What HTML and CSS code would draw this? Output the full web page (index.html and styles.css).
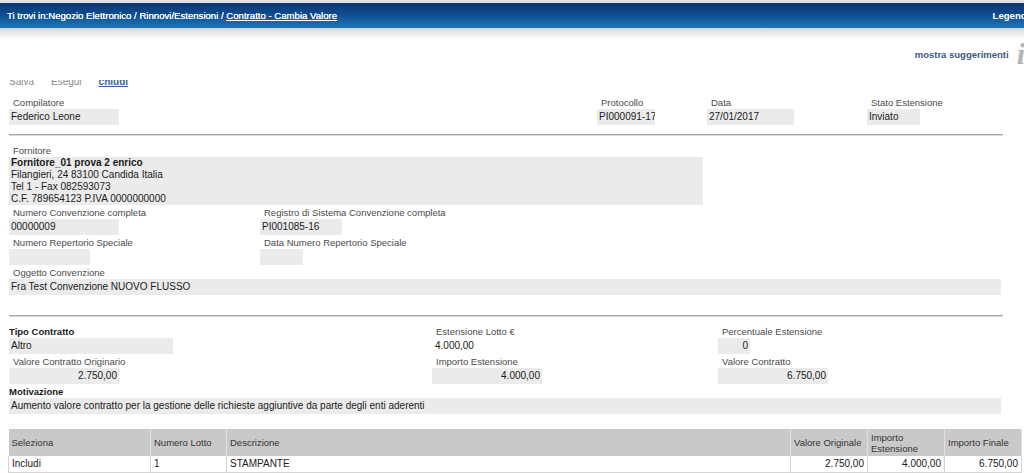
FILE: index.html
```html
<!DOCTYPE html>
<html lang="it">
<head>
    <meta charset="UTF-8">
    <title>Contratto - Cambia Valore</title>
    <link rel="stylesheet" href="styles.css">
</head>
<body>

    <!-- Breadcrumb bar -->
    <div class="topbar">
        <div class="crumbs">Ti trovi in:Negozio Elettronico / Rinnovi/Estensioni / <a href="#">Contratto - Cambia Valore</a></div>
        <div class="legend">Legenda</div>
    </div>
    <div class="topshade"></div>

    <div class="hints">
        <a href="#" class="hint-link">mostra suggerimenti</a>
        <span class="info-i">i</span>
    </div>

    <!-- Toolbar -->
    <div class="toolbar">
        <div class="toolbar-inner">
            <span class="tool">Salva</span>
            <span class="tool">Esegui</span>
            <a href="#" class="tool tool-link">chiudi</a>
        </div>
    </div>

    <div class="form">
        <div class="row row-head">
            <div class="field">
                <div class="label">Compilatore</div>
                <div class="box w110">Federico Leone</div>
            </div>
            <div class="field">
                <div class="label">Protocollo</div>
                <div class="box w58">PI000091-17</div>
            </div>
            <div class="field">
                <div class="label">Data</div>
                <div class="box w87">27/01/2017</div>
            </div>
            <div class="field">
                <div class="label">Stato Estensione</div>
                <div class="box w53">Inviato</div>
            </div>
        </div>

        <div class="sep"></div>

        <div class="field">
            <div class="label">Fornitore</div>
            <div class="box box-multi w694">
                <strong>Fornitore_01 prova 2 enrico</strong><br>
                Filangieri, 24 83100 Candida Italia<br>
                Tel 1 - Fax 082593073<br>
                C.F. 789654123 P.IVA 0000000000
            </div>
        </div>

        <div class="row row-conv">
            <div class="field">
                <div class="label">Numero Convenzione completa</div>
                <div class="box w110">00000009</div>
            </div>
            <div class="field">
                <div class="label">Registro di Sistema Convenzione completa</div>
                <div class="box w82">PI001085-16</div>
            </div>
        </div>

        <div class="row row-conv">
            <div class="field">
                <div class="label">Numero Repertorio Speciale</div>
                <div class="box w81"></div>
            </div>
            <div class="field">
                <div class="label">Data Numero Repertorio Speciale</div>
                <div class="box w43"></div>
            </div>
        </div>

        <div class="field">
            <div class="label">Oggetto Convenzione</div>
            <div class="box w992">Fra Test Convenzione NUOVO FLUSSO</div>
        </div>

        <div class="sep sep-low"></div>

        <div class="row row-value">
            <div class="field">
                <div class="label label-bold">Tipo Contratto</div>
                <div class="box w164">Altro</div>
            </div>
            <div class="field">
                <div class="label">Estensione Lotto &euro;</div>
                <div class="box box-plain w110">4.000,00</div>
            </div>
            <div class="field">
                <div class="label">Percentuale Estensione</div>
                <div class="box num w32">0</div>
            </div>
        </div>

        <div class="row row-value">
            <div class="field">
                <div class="label">Valore Contratto Originario</div>
                <div class="box num w110">2.750,00</div>
            </div>
            <div class="field">
                <div class="label">Importo Estensione</div>
                <div class="box num w110">4.000,00</div>
            </div>
            <div class="field">
                <div class="label">Valore Contratto</div>
                <div class="box num w110">6.750,00</div>
            </div>
        </div>

        <div class="field">
            <div class="label label-bold">Motivazione</div>
            <div class="box w992">Aumento valore contratto per la gestione delle richieste aggiuntive da parte degli enti aderenti</div>
        </div>
    </div>

    <!-- Lotti -->
    <table class="lots">
        <thead>
            <tr>
                <th class="c-sel">Seleziona</th>
                <th class="c-num">Numero Lotto</th>
                <th class="c-desc">Descrizione</th>
                <th class="c-val">Valore Originale</th>
                <th class="c-val">Importo Estensione</th>
                <th class="c-val">Importo Finale</th>
            </tr>
        </thead>
        <tbody>
            <tr>
                <td>Includi</td>
                <td>1</td>
                <td>STAMPANTE</td>
                <td class="num">2.750,00</td>
                <td class="num">4.000,00</td>
                <td class="num">6.750,00</td>
            </tr>
        </tbody>
    </table>

</body>
</html>
```

FILE: styles.css
```css
/* Rinnovi / Estensioni - cambia valore contratto */
body {
    margin: 0;
    font-family: "Liberation Sans", Arial, sans-serif;
    font-size: 10px;
    color: #1a1a1a;
    background-color: #fff;
    overflow: hidden;
}

.topbar {
    border-top: 3px solid #dfe4ea;
    height: 25px;
    background: linear-gradient(#0a3571, #114f93 50%, #1b78ba);
    display: flex;
    justify-content: space-between;
    align-items: center;
    padding-left: 7px;
    color: #fff;
    font-size: 9.6px;
    overflow: hidden;
}

.crumbs {
    text-shadow: 0 0 0.4px #fff;
}

.crumbs a {
    color: #fff;
}

.legend {
    font-weight: bold;
    margin-right: -8px;
}

.topshade {
    height: 11px;
    background: linear-gradient(#d3d6d9, #fff);
}

.hints {
    display: flex;
    justify-content: flex-end;
    align-items: center;
    height: 24px;
    margin-top: 3px;
}

.hint-link {
    font-weight: bold;
    font-size: 9.5px;
    color: #3c5880;
    text-decoration: none;
}

.info-i {
    font-family: "Liberation Serif", serif;
    font-style: italic;
    font-weight: bold;
    font-size: 30px;
    line-height: 24px;
    color: #b4b4b4;
    margin-left: 8px;
    margin-right: -1px;
}

.toolbar {
    margin-top: 14px;
    height: 9px;
    overflow: hidden;
    padding-left: 9px;
}

.toolbar-inner {
    margin-top: -5px;
    display: flex;
    gap: 17px;
    line-height: 14px;
    font-size: 10px;
}

.tool {
    color: #8a8a8a;
}

.tool-link {
    color: #3563a8;
    font-weight: bold;
}

.form {
    margin-top: 8px;
    padding-left: 9px;
}

.row {
    display: grid;
}

.row-head {
    grid-template-columns: 588px 110px 160px auto;
}

.row-conv {
    grid-template-columns: 251px auto;
}

.row-value {
    grid-template-columns: 423px 286px auto;
}

.field {
    margin-bottom: 2px;
}

.label {
    line-height: 12px;
    padding-left: 4px;
    font-size: 9.5px;
    color: #4a4a4a;
}

.label-bold {
    padding-left: 0;
    font-weight: bold;
    color: #1a1a1a;
}

.box {
    background-color: #ebebeb;
    height: 16px;
    line-height: 16px;
    padding: 0 2px;
    box-sizing: border-box;
    white-space: nowrap;
    overflow: hidden;
}

.box-multi {
    height: 48px;
    line-height: 12px;
    white-space: normal;
}

.box-plain {
    background-color: transparent;
    padding-left: 3px;
}

.num {
    text-align: right;
}

.w32 { width: 32px; }
.w43 { width: 43px; }
.w53 { width: 53px; }
.w58 { width: 58px; }
.w81 { width: 81px; }
.w82 { width: 82px; }
.w87 { width: 87px; }
.w110 { width: 110px; }
.w164 { width: 164px; }
.w694 { width: 694px; }
.w992 { width: 992px; }

.sep {
    width: 994px;
    border-top: 1px solid #a9a9a9;
    border-bottom: 1px solid #d9d9d9;
    margin: 7px 0 9px;
}

.sep-low {
    margin-top: 20px;
}

.lots {
    margin: 15px 0 0 8px;
    width: 1012px;
    border-collapse: collapse;
    table-layout: fixed;
}

.lots th,
.lots td {
    box-sizing: border-box;
    padding: 0 3px;
}

.lots th {
    background-color: #c9c9c9;
    color: #333;
    font-weight: normal;
    font-size: 9.5px;
    text-align: left;
    height: 27px;
    line-height: 11px;
    border-right: 1px solid #e2e2e2;
}

.lots td {
    height: 16px;
    border: 1px solid #d4d4d4;
    border-top: none;
}

.c-sel { width: 142px; }
.c-num { width: 76px; }
.c-desc { width: 564px; }
.c-val { width: 77px; }
```
